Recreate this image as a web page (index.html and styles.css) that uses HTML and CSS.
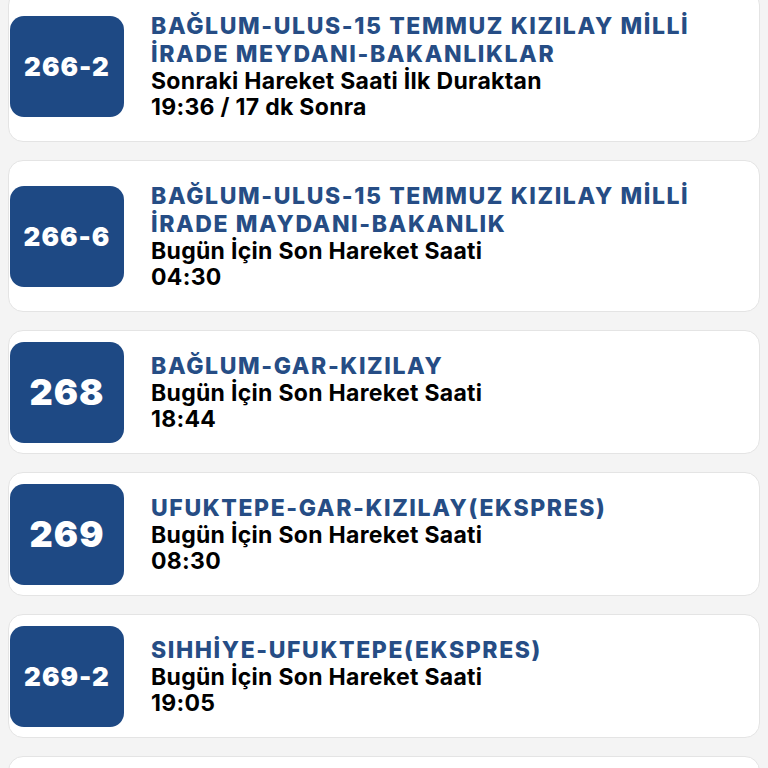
FILE: index.html
```html
<!DOCTYPE html>
<html lang="tr">
  <head>
    <meta charset="UTF-8" />
    <meta name="viewport" content="width=device-width, initial-scale=1.0" />
    <title>Hat Listesi</title>
    <link rel="stylesheet" href="styles.css">
  </head>
  <body>
    <div class="hat-listesi">
      <div class="hat-kart">
        <div class="hat-no uzun">266-2</div>
        <div class="hat-bilgi">
          <div class="hat-adi">BAĞLUM-ULUS-15 TEMMUZ KIZILAY MİLLİ İRADE MEYDANI-BAKANLIKLAR</div>
          <div class="hat-durum">Sonraki Hareket Saati İlk Duraktan</div>
          <div class="hat-saat">19:36 / 17 dk Sonra</div>
        </div>
      </div>

      <div class="hat-kart">
        <div class="hat-no uzun">266-6</div>
        <div class="hat-bilgi">
          <div class="hat-adi">BAĞLUM-ULUS-15 TEMMUZ KIZILAY MİLLİ İRADE MAYDANI-BAKANLIK</div>
          <div class="hat-durum">Bugün İçin Son Hareket Saati</div>
          <div class="hat-saat">04:30</div>
        </div>
      </div>

      <div class="hat-kart">
        <div class="hat-no">268</div>
        <div class="hat-bilgi">
          <div class="hat-adi">BAĞLUM-GAR-KIZILAY</div>
          <div class="hat-durum">Bugün İçin Son Hareket Saati</div>
          <div class="hat-saat">18:44</div>
        </div>
      </div>

      <div class="hat-kart">
        <div class="hat-no">269</div>
        <div class="hat-bilgi">
          <div class="hat-adi">UFUKTEPE-GAR-KIZILAY(EKSPRES)</div>
          <div class="hat-durum">Bugün İçin Son Hareket Saati</div>
          <div class="hat-saat">08:30</div>
        </div>
      </div>

      <div class="hat-kart">
        <div class="hat-no uzun">269-2</div>
        <div class="hat-bilgi">
          <div class="hat-adi">SIHHİYE-UFUKTEPE(EKSPRES)</div>
          <div class="hat-durum">Bugün İçin Son Hareket Saati</div>
          <div class="hat-saat">19:05</div>
        </div>
      </div>

      <div class="hat-kart">
        <div class="hat-no">270</div>
        <div class="hat-bilgi">
          <div class="hat-adi">BAĞLUM-KIZILAY</div>
          <div class="hat-durum">Bugün İçin Son Hareket Saati</div>
          <div class="hat-saat">20:10</div>
        </div>
      </div>
    </div>
  </body>
</html>
```

FILE: styles.css
```css
body {
  margin: 0;
  padding: 0 8px;
  background-color: #f4f4f4;
  font-family: Inter, "Noto Sans", sans-serif;
  height: 768px;
  overflow: hidden;
}

.hat-listesi {
  display: flex;
  flex-direction: column;
  gap: 18px;
  margin-top: -10px;
}

.hat-kart {
  display: flex;
  align-items: center;
  gap: 27px;
  padding: 10px 14px 10px 1px;
  background-color: white;
  border: 1px solid #e4e4e4;
  border-radius: 15px;
}

.hat-no {
  flex: 0 0 114px;
  height: 101px;
  display: flex;
  align-items: center;
  justify-content: center;
  background-color: #1e4984;
  border-radius: 14px;
  color: white;
  font-size: 36px;
  font-weight: 900;
  letter-spacing: 1px;
}

.hat-no.uzun {
  font-size: 26px;
}

.hat-bilgi {
  padding: 11px 0;
}

.hat-adi {
  color: #264d85;
  font-size: 23px;
  font-weight: 800;
  letter-spacing: 1.6px;
  line-height: 28px;
}

.hat-durum,
.hat-saat {
  color: #000;
  font-size: 23px;
  font-weight: 700;
  letter-spacing: 0.3px;
  line-height: 26px;
}
```
